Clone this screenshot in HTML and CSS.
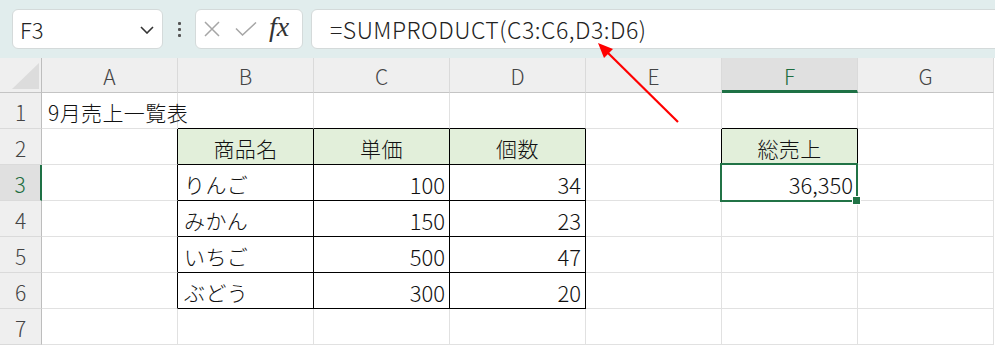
FILE: index.html
```html
<!DOCTYPE html>
<html lang="ja">
<head>
<meta charset="utf-8">
<link rel="stylesheet" href="styles.css">
</head>
<body>
<div class="app">
  <div class="bar">
    <div class="namebox">
      <span class="name">F3</span>
      <svg class="chev" width="14" height="8" viewBox="0 0 14 8"><path d="M1 1 L7 7 L13 1" fill="none" stroke="#333" stroke-width="1.6"/></svg>
    </div>
    <div class="kebab"><i></i><i></i><i></i></div>
    <div class="fxbox">
      <svg width="16" height="16" viewBox="0 0 16 16"><path d="M1 1 L15 15 M15 1 L1 15" stroke="#a6a6a6" stroke-width="1.5" fill="none"/></svg>
      <svg width="22" height="14" viewBox="0 0 22 14"><path d="M1 6.5 L7.5 13 L21 0.5" stroke="#a6a6a6" stroke-width="1.5" fill="none"/></svg>
      <span class="fx">fx</span>
    </div>
    <div class="formula">=SUMPRODUCT(C3:C6,D3:D6)</div>
  </div>

  <div class="sheet">
    <div class="hd corner"><span class="tri"></span></div>
    <div class="hd col">A</div>
    <div class="hd col">B</div>
    <div class="hd col">C</div>
    <div class="hd col">D</div>
    <div class="hd col">E</div>
    <div class="hd col sel">F</div>
    <div class="hd col">G</div>

    <div class="hd row">1</div>
    <div class="c">9月売上一覧表</div>
    <div class="c tb"></div>
    <div class="c tb"></div>
    <div class="c tb"></div>
    <div class="c"></div>
    <div class="c tb"></div>
    <div class="c"></div>

    <div class="hd row">2</div>
    <div class="c tl"></div>
    <div class="c t th">商品名</div>
    <div class="c t th">単価</div>
    <div class="c t th">個数</div>
    <div class="c tl"></div>
    <div class="c t th">総売上</div>
    <div class="c"></div>

    <div class="hd row rsel">3</div>
    <div class="c tl"></div>
    <div class="c t">りんご</div>
    <div class="c t num">100</div>
    <div class="c t num">34</div>
    <div class="c"></div>
    <div class="c num active">36,350</div>
    <div class="c"></div>

    <div class="hd row">4</div>
    <div class="c tl"></div>
    <div class="c t">みかん</div>
    <div class="c t num">150</div>
    <div class="c t num">23</div>
    <div class="c"></div>
    <div class="c"></div>
    <div class="c"></div>

    <div class="hd row">5</div>
    <div class="c tl"></div>
    <div class="c t">いちご</div>
    <div class="c t num">500</div>
    <div class="c t num">47</div>
    <div class="c"></div>
    <div class="c"></div>
    <div class="c"></div>

    <div class="hd row">6</div>
    <div class="c tl"></div>
    <div class="c t">ぶどう</div>
    <div class="c t num">300</div>
    <div class="c t num">20</div>
    <div class="c"></div>
    <div class="c"></div>
    <div class="c"></div>

    <div class="hd row">7</div>
    <div class="c"></div>
    <div class="c"></div>
    <div class="c"></div>
    <div class="c"></div>
    <div class="c"></div>
    <div class="c"></div>
    <div class="c"></div>
  </div>

  <svg class="arrow" width="995" height="346" viewBox="0 0 995 346">
    <line x1="678" y1="122" x2="606" y2="51" stroke="#ff0000" stroke-width="2.2"/>
    <polygon points="598,43 613,49 604,58" fill="#ff0000"/>
  </svg>
</div>
</body>
</html>
```

FILE: styles.css
```css
* { box-sizing: border-box; }
html, body { margin: 0; padding: 0; background: #fff; }
body { width: 995px; height: 346px; overflow: hidden; font-family: "Noto Sans CJK JP", "Noto Sans", sans-serif; font-weight: 300; }

.app { position: relative; width: 995px; height: 346px; }

.bar {
  height: 58px;
  background: #e1eded;
  display: flex;
  align-items: center;
  padding-left: 12px;
}
.namebox {
  width: 151px;
  height: 40px;
  background: #fff;
  border: 1px solid #d4dada;
  border-radius: 6px;
  display: flex;
  align-items: center;
  justify-content: space-between;
  padding: 0 8px 0 7px;
}
.name { font-size: 22px; color: #222; }
.chev { margin-top: 2px; }
.kebab {
  width: 32px;
  display: flex;
  flex-direction: column;
  align-items: center;
  gap: 3px;
}
.kebab i { display: block; width: 3px; height: 3px; background: #555; border-radius: 1px; }
.fxbox {
  width: 108px;
  height: 40px;
  background: #fff;
  border: 1px solid #d4dada;
  border-radius: 6px;
  display: flex;
  align-items: center;
  padding-left: 8px;
  gap: 15px;
}
.fx {
  font-family: "Liberation Serif", serif;
  font-style: italic;
  font-weight: normal;
  font-size: 28px;
  color: #333;
  margin-left: -3px;
  margin-top: -4px;
}
.formula {
  margin-left: 8px;
  flex: 1;
  height: 40px;
  margin-right: -10px;
  background: #fff;
  border: 1px solid #d4dada;
  border-radius: 6px 0 0 6px;
  display: flex;
  align-items: center;
  padding-left: 18px;
  font-size: 23px;
  letter-spacing: 0.5px;
  color: #222;
}

.sheet {
  display: grid;
  grid-template-columns: 42px repeat(7, 136px);
  grid-template-rows: 35px repeat(7, 36px);
}
.hd {
  background: #efefef;
  color: #444;
  font-size: 21px;
  display: flex;
  align-items: center;
  justify-content: center;
}
.corner { border-right: 1px solid #bdbdbd; border-bottom: 1px solid #c4c4c4; position: relative; }
.tri {
  position: absolute;
  left: 12px; top: 5px;
  width: 27px; height: 26px;
  background: #dcdcdc;
  clip-path: polygon(100% 0, 100% 100%, 0 100%);
}
.col { border-right: 1px solid #dadada; border-bottom: 1px solid #c4c4c4; padding-top: 1px; }
.col.sel { background: #e0e0e0; color: #1e6e40; border-bottom: 3px solid #1e7145; padding-top: 3px; }
.row { border-right: 1px solid #bdbdbd; border-bottom: 1px solid #dadada; padding-top: 2px; }
.row.rsel { background: #e0e0e0; color: #1e6e40; border-right: 2px solid #1e7145; }

.c {
  border-right: 1px solid #e1e1e1;
  border-bottom: 1px solid #e1e1e1;
  font-size: 21px;
  letter-spacing: 0.4px;
  color: #111;
  display: flex;
  align-items: center;
  padding: 2px 5px 0 6px;
  white-space: nowrap;
}
.c.num { font-size: 22px; letter-spacing: 0; justify-content: flex-end; padding-right: 4px; }
.c.tb { border-bottom-color: #000; }
.c.tl { border-right-color: #000; }
.c.t { border-right-color: #000; border-bottom-color: #000; }
.c.th { background: #e2efda; justify-content: center; padding-left: 0; padding-right: 0; }
.active { position: relative; }
.active::before {
  content: "";
  position: absolute;
  left: -2px; top: -2px; right: -1px; bottom: -2px;
  border: 2px solid #217346;
}
.active::after {
  content: "";
  position: absolute;
  right: -4px; bottom: -5px;
  width: 7px; height: 7px;
  background: #217346;
  border: 1px solid #fff;
}

.arrow { position: absolute; left: 0; top: 0; pointer-events: none; }
```
